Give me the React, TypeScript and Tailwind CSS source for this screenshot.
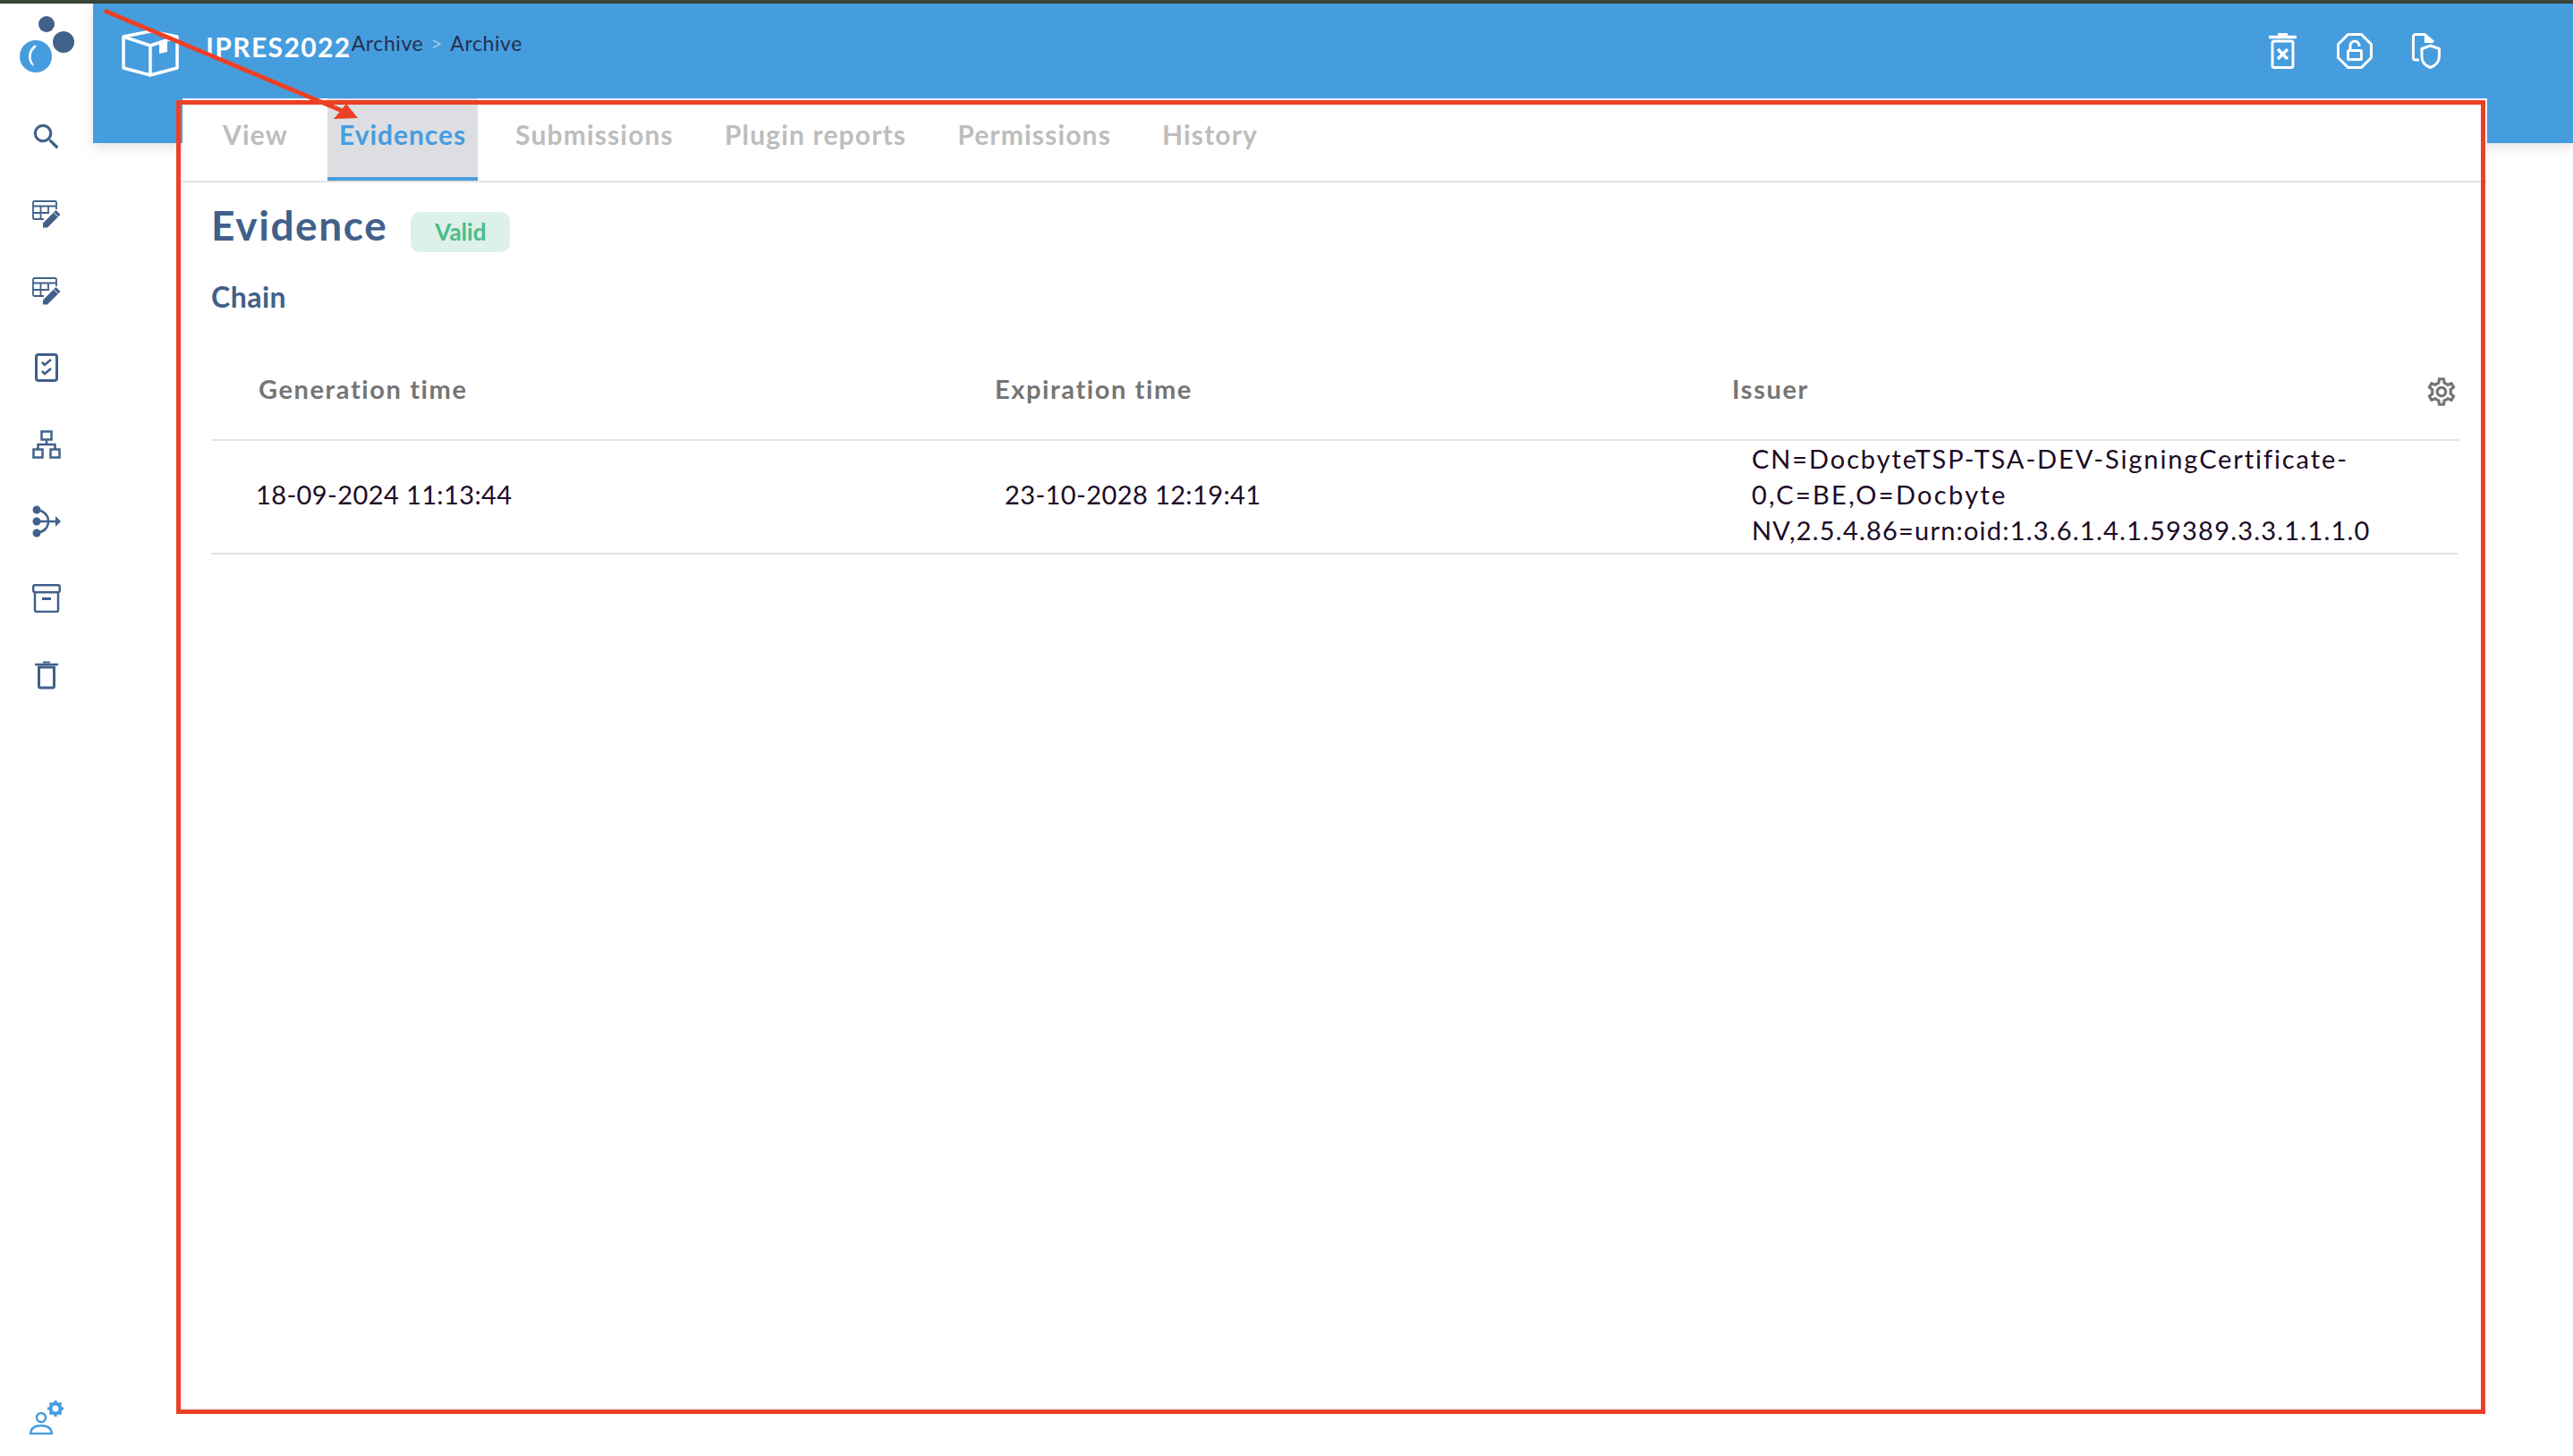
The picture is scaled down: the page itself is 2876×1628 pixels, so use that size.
import { MdOutlineSearch, MdOutlineSettings } from "react-icons/md"

const tabs = ["View", "Evidences", "Submissions", "Plugin reports", "Permissions", "History"]

function Logo() {
  return (
    <svg width="62" height="64" viewBox="0 0 62 64" className="mt-[14px] ml-px">
      <circle cx="30" cy="9" r="9" fill="#41608a" />
      <circle cx="49" cy="29" r="12" fill="#41608a" />
      <circle cx="18" cy="45" r="18" fill="#469dde" />
      <path d="M16 33 C9 38 8 49 14 55 C15 56 16 55 15 53 C11 47 12 40 18 35 C19 33 18 32 16 33 Z" fill="#fff" />
    </svg>
  )
}

function TableEdit() {
  return (
    <svg width="32" height="31" viewBox="0 0 32 31" fill="none" stroke="#41608a">
      <path d="M13 21H2.500A1.500 1.500 0 0 1 1 19.500V2.500A1.500 1.500 0 0 1 2.500 1H25.500A1.500 1.500 0 0 1 27 2.500V10" strokeWidth="1.800" />
      <path d="M1 6.500H27M1 14H19M9.500 6.500V21M18 6.500V14" strokeWidth="1.800" />
      <path d="M12 30.500V25.500L26.500 11L31.500 16L17 30.500Z" fill="#41608a" stroke="none" />
      <path d="M24 13.500L29 18.500" stroke="#fff" strokeWidth="1" />
    </svg>
  )
}

function Checklist() {
  return (
    <svg width="26" height="32" viewBox="0 0 26 32" fill="none" stroke="#41608a">
      <rect x="1.500" y="1.500" width="23" height="29" rx="2.500" strokeWidth="3" />
      <path d="M8 10L11 13L18 7M8 20L11 23L18 17" strokeWidth="2.500" />
    </svg>
  )
}

function Hierarchy() {
  return (
    <svg width="32" height="32" viewBox="0 0 32 32" fill="none" stroke="#41608a" strokeWidth="2.500">
      <rect x="10.500" y="1.500" width="11" height="9" />
      <rect x="1.500" y="21.500" width="10" height="9" />
      <rect x="20.500" y="21.500" width="10" height="9" />
      <path d="M16 10V16M6.500 21V16H25.500V21" />
    </svg>
  )
}

function Merge() {
  return (
    <svg width="32" height="36" viewBox="0 0 32 36" fill="none" stroke="#41608a" strokeWidth="2.500">
      <circle cx="5" cy="5" r="4.500" fill="#41608a" stroke="none" />
      <circle cx="5" cy="18" r="4.500" fill="#41608a" stroke="none" />
      <circle cx="5" cy="31" r="4.500" fill="#41608a" stroke="none" />
      <path d="M5 5C13 6 18 11 18 18C18 25 13 30 5 31M5 18H27" />
      <path d="M26 12L32 18L26 24Z" fill="#41608a" stroke="none" />
    </svg>
  )
}

function ArchiveBox() {
  return (
    <svg width="32" height="32" viewBox="0 0 32 32" fill="none" stroke="#41608a" strokeWidth="2.500">
      <rect x="1.200" y="1.200" width="29.600" height="8" rx="2" />
      <path d="M3 9V29A2 2 0 0 0 5 31H27A2 2 0 0 0 29 29V9" />
      <path d="M11 16.500H21" strokeWidth="3" />
    </svg>
  )
}

function Trash() {
  return (
    <svg width="26" height="32" viewBox="0 0 26 32" fill="none" stroke="#41608a">
      <path d="M0 4H26" strokeWidth="2.500" />
      <path d="M9 1.500H17" strokeWidth="2" />
      <path d="M4.500 7V28A2 2 0 0 0 6.500 30H19.500A2 2 0 0 0 21.500 28V7H4.500Z" strokeWidth="3" />
    </svg>
  )
}

function UserGear() {
  return (
    <svg width="38" height="38" viewBox="0 0 38 38" fill="none">
      <circle cx="13" cy="19" r="5" stroke="#469dde" strokeWidth="2.500" />
      <path d="M1.200 37C1.500 31 6 28 13 28C20 28 24.500 31 24.800 37Z" stroke="#469dde" strokeWidth="2.500" />
      <circle cx="29" cy="9" r="5.500" stroke="#469dde" strokeWidth="4" />
      <path
        d="M29 0V3M29 15V18M20 9H23M35 9H38M22.600 2.600L24.800 4.800M33.200 13.200L35.400 15.400M35.400 2.600L33.200 4.800M24.800 13.200L22.600 15.400"
        stroke="#469dde"
        strokeWidth="3"
      />
    </svg>
  )
}

function BoxIcon() {
  return (
    <svg width="64" height="53" viewBox="0 0 64 53" fill="none" stroke="#fff" strokeWidth="3.500" strokeLinejoin="round">
      <path d="M2 8L32 2L62 8V43L32 51L2 43Z" />
      <path d="M2 8L32 18L62 8M32 18V51" />
      <path d="M42 14L51 11V25L42 27Z" fill="#fff" stroke="none" />
    </svg>
  )
}

function TrashX() {
  return (
    <svg width="31" height="40" viewBox="0 0 31 40" fill="none" stroke="#fff">
      <path d="M0 4.500H31" strokeWidth="3.500" />
      <path d="M10 1.500H21" strokeWidth="3" />
      <rect x="4" y="9" width="23" height="29.500" rx="2" strokeWidth="3" />
      <path d="M10 18L21 29M21 18L10 29" strokeWidth="3.500" />
    </svg>
  )
}

function OctagonLock() {
  return (
    <svg width="40" height="40" viewBox="0 0 40 40" fill="none" stroke="#fff" strokeWidth="3">
      <path d="M12.500 1.500H27.500L38.500 12.500V27.500L27.500 38.500H12.500L1.500 27.500V12.500Z" />
      <rect x="12.500" y="19.500" width="15" height="10" rx="1" />
      <path d="M15 18V14A5 5 0 0 1 25 14V15" />
    </svg>
  )
}

function FileShield() {
  return (
    <svg width="32" height="40" viewBox="0 0 32 40" fill="none" stroke="#fff" strokeWidth="3">
      <path d="M8 30H4A2.500 2.500 0 0 1 1.500 27.500V4A2.500 2.500 0 0 1 4 1.500H14L24 10" />
      <path d="M14 1.500L24 11L14 11Z" fill="#fff" stroke="none" />
      <path d="M20.500 14L30.500 17.500V26C30.500 32 26 36.500 20.500 38.500C15 36.500 11 32 11 26V17.500Z" />
    </svg>
  )
}

export default function App() {
  return (
    <div className="relative flex h-[1628px] w-[2876px] flex-col overflow-hidden bg-white font-['Lato',sans-serif]">
      <div className="h-[4px] bg-[#3b4539]" />

      <div className="flex min-h-0 flex-1">
        <aside className="flex w-[104px] flex-col items-center bg-white">
          <Logo />
          <nav className="mt-[28px] flex flex-col items-center">
            <div className="flex h-[86px] items-center">
              <MdOutlineSearch size={38} color="#41608a" />
            </div>
            <div className="flex h-[86px] items-center"><TableEdit /></div>
            <div className="flex h-[86px] items-center"><TableEdit /></div>
            <div className="flex h-[86px] items-center"><Checklist /></div>
            <div className="flex h-[86px] items-center"><Hierarchy /></div>
            <div className="flex h-[86px] items-center"><Merge /></div>
            <div className="flex h-[86px] items-center"><ArchiveBox /></div>
            <div className="flex h-[86px] items-center"><Trash /></div>
          </nav>
          <div className="mt-auto pb-[24px] pr-px">
            <UserGear />
          </div>
        </aside>

        <div className="flex min-w-0 flex-1 flex-col">
          <header className="flex h-[156px] shrink-0 items-start bg-[#469dde] pr-[148px] pl-[32px] pt-[29px] shadow-[0_6px_14px_rgba(0,0,0,0.1)]">
            <BoxIcon />
            <span className="ml-[30px] mt-[1px] text-[30px] leading-[36px] font-bold tracking-[1.4px] text-white">IPRES2022</span>
            <div className="flex text-[23px] leading-[30px] tracking-[0.6px] text-[#22304f]">
              <span>Archive</span>
              <span className="mx-[8px] text-[#9cc8ec]">&gt;</span>
              <span>Archive</span>
            </div>
            <div className="mt-[4px] ml-auto flex items-center gap-[45px]">
              <TrashX />
              <OctagonLock />
              <div className="ml-[-1px]"><FileShield /></div>
            </div>
          </header>

          <main className="relative z-10 mt-[-50px] ml-[100px] mr-[96px] flex flex-1 flex-col bg-white">
            <div className="flex h-[94px] shrink-0 gap-[31px] border-b-2 border-[#e3e3e3] pl-[32px]">
              {tabs.map((tab) => (
                <div
                  key={tab}
                  className={
                    tab === "Evidences"
                      ? "mr-[-2px] h-[92px] border-b-4 border-[#469dde] bg-[#dddee2] px-[13px] pt-[22px] text-[30px] leading-[36px] font-bold tracking-[0.95px] text-[#469dde]"
                      : "h-[92px] px-[13px] pt-[22px] text-[30px] leading-[36px] font-bold tracking-[1.15px] text-[#bdbdbd]"
                  }
                >
                  {tab}
                </div>
              ))}
            </div>

            <div className="flex flex-col px-[32px]">
              <div className="mt-[20px] flex items-start">
                <h1 className="text-[46px] leading-[56px] font-bold tracking-[1.6px] text-[#41608a]">Evidence</h1>
                <span className="mt-[13px] ml-[26px] flex h-[45px] w-[111px] items-center justify-center rounded-[10px] bg-[#dcf1e9] text-[26px] font-bold text-[#4cbb87]">
                  Valid
                </span>
              </div>
              <h2 className="mt-[32px] text-[32px] leading-[36px] font-bold tracking-[0.5px] text-[#41608a]">Chain</h2>

              <div className="relative mt-[67px] grid grid-cols-[823px_824px_1fr] border-b-2 border-[#e3e3e3] pb-[38px] text-[29px] leading-[36px] font-bold tracking-[1.6px] text-[#757575]">
                <div className="pl-[53px]">Generation time</div>
                <div className="pl-[53px]">Expiration time</div>
                <div className="pl-[53px]">Issuer</div>
                <MdOutlineSettings size={38} className="absolute top-[2px] right-[0px]" />
              </div>
              <div className="grid h-[127px] grid-cols-[823px_824px_1fr] items-center border-b-2 border-[#e3e3e3] pb-[5px] text-[29px] leading-[40px] font-normal text-[#1c0a26]">
                <div className="pl-[50px] tracking-[0.4px]">18-09-2024 11:13:44</div>
                <div className="pl-[64px] tracking-[0.4px]">23-10-2028 12:19:41</div>
                <div className="pl-[75px]">
                  <span className="block tracking-[1.9px]">CN=DocbyteTSP-TSA-DEV-SigningCertificate-</span>
                  <span className="block tracking-[2.3px]">0,C=BE,O=Docbyte</span>
                  <span className="block tracking-[1.2px]">NV,2.5.4.86=urn:oid:1.3.6.1.4.1.59389.3.3.1.1.1.0</span>
                </div>
              </div>
            </div>
          </main>
        </div>
      </div>

      {/* annotation drawn over the screenshot */}
      <div className="pointer-events-none absolute top-[112px] left-[197px] z-20 h-[1469px] w-[2581px] border-[5px] border-[#ec4026]" />
      <svg className="pointer-events-none absolute top-0 left-0 z-30" width="420" height="140" viewBox="0 0 420 140">
        <path d="M117 12L385 125" stroke="#ec4026" strokeWidth="5" />
        <path d="M400 132L373 133L387 116Z" fill="#ec4026" />
      </svg>
    </div>
  )
}
